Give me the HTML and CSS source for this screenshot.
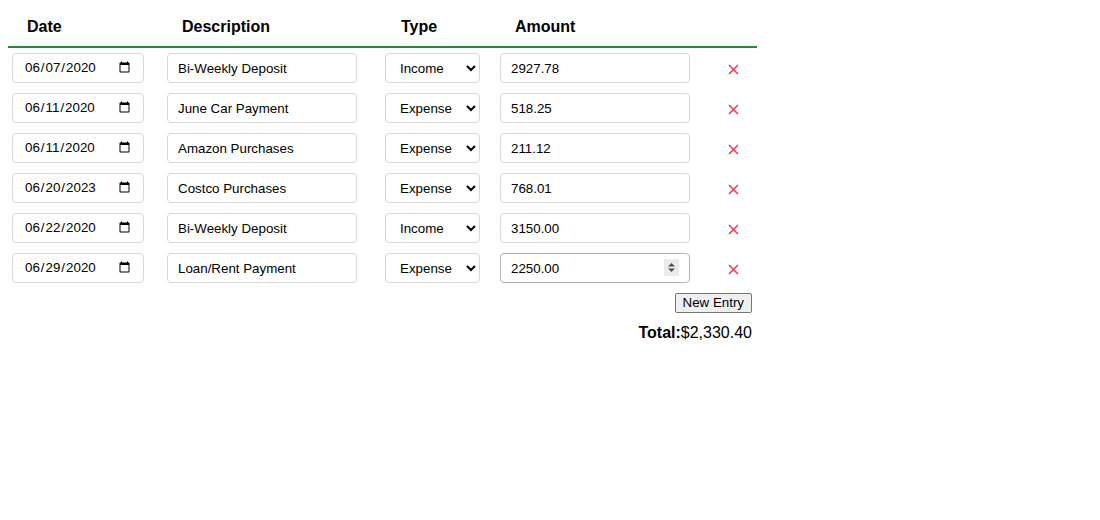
FILE: index.html
```html
<!DOCTYPE html>
<html>
<head>
<meta charset="utf-8">
<link rel="stylesheet" href="styles.css">
</head>
<body>
<div class="ledger">
  <div class="row head">
    <div class="th">Date</div>
    <div class="th">Description</div>
    <div class="th type-h">Type</div>
    <div class="th">Amount</div>
    <div class="th"></div>
  </div>

  <div class="row">
    <div class="cell"><input class="date" type="date" value="2020-06-07"></div>
    <div class="cell"><input class="text" type="text" value="Bi-Weekly Deposit"></div>
    <div class="cell"><select class="type"><option selected>Income</option><option>Expense</option></select></div>
    <div class="cell"><input class="amount" type="text" value="2927.78"></div>
    <div class="cell del"><svg width="11" height="11" viewBox="0 0 11 11"><path d="M1 1L10 10M10 1L1 10" stroke="#f5375a" stroke-width="1.5"/></svg></div>
  </div>

  <div class="row">
    <div class="cell"><input class="date" type="date" value="2020-06-11"></div>
    <div class="cell"><input class="text" type="text" value="June Car Payment"></div>
    <div class="cell"><select class="type"><option>Income</option><option selected>Expense</option></select></div>
    <div class="cell"><input class="amount" type="text" value="518.25"></div>
    <div class="cell del"><svg width="11" height="11" viewBox="0 0 11 11"><path d="M1 1L10 10M10 1L1 10" stroke="#f5375a" stroke-width="1.5"/></svg></div>
  </div>

  <div class="row">
    <div class="cell"><input class="date" type="date" value="2020-06-11"></div>
    <div class="cell"><input class="text" type="text" value="Amazon Purchases"></div>
    <div class="cell"><select class="type"><option>Income</option><option selected>Expense</option></select></div>
    <div class="cell"><input class="amount" type="text" value="211.12"></div>
    <div class="cell del"><svg width="11" height="11" viewBox="0 0 11 11"><path d="M1 1L10 10M10 1L1 10" stroke="#f5375a" stroke-width="1.5"/></svg></div>
  </div>

  <div class="row">
    <div class="cell"><input class="date" type="date" value="2023-06-20"></div>
    <div class="cell"><input class="text" type="text" value="Costco Purchases"></div>
    <div class="cell"><select class="type"><option>Income</option><option selected>Expense</option></select></div>
    <div class="cell"><input class="amount" type="text" value="768.01"></div>
    <div class="cell del"><svg width="11" height="11" viewBox="0 0 11 11"><path d="M1 1L10 10M10 1L1 10" stroke="#f5375a" stroke-width="1.5"/></svg></div>
  </div>

  <div class="row">
    <div class="cell"><input class="date" type="date" value="2020-06-22"></div>
    <div class="cell"><input class="text" type="text" value="Bi-Weekly Deposit"></div>
    <div class="cell"><select class="type"><option selected>Income</option><option>Expense</option></select></div>
    <div class="cell"><input class="amount" type="text" value="3150.00"></div>
    <div class="cell del"><svg width="11" height="11" viewBox="0 0 11 11"><path d="M1 1L10 10M10 1L1 10" stroke="#f5375a" stroke-width="1.5"/></svg></div>
  </div>

  <div class="row">
    <div class="cell"><input class="date" type="date" value="2020-06-29"></div>
    <div class="cell"><input class="text" type="text" value="Loan/Rent Payment"></div>
    <div class="cell"><select class="type"><option>Income</option><option selected>Expense</option></select></div>
    <div class="cell">
      <div class="amount-wrap">
        <input class="amount hovered" type="text" value="2250.00">
        <span class="spinner"><svg width="15" height="17" viewBox="0 0 15 17"><rect width="15" height="17" fill="#ececec"/><path d="M4 7.5L7.5 4L11 7.5Z M4 9.5L7.5 13L11 9.5Z" fill="#505050"/></svg></span>
      </div>
    </div>
    <div class="cell del"><svg width="11" height="11" viewBox="0 0 11 11"><path d="M1 1L10 10M10 1L1 10" stroke="#f5375a" stroke-width="1.5"/></svg></div>
  </div>

  <div class="footer">
    <button class="new-btn" type="button">New Entry</button>
    <div class="total"><b>Total:</b>$2,330.40</div>
  </div>
</div>
</body>
</html>
```

FILE: styles.css
```css
body {
  margin: 8px;
  font-family: "Liberation Sans", Arial, sans-serif;
  color: #000;
  background: #fff;
}

.ledger {
  width: 749px;
}

.row {
  display: grid;
  grid-template-columns: 155px 218px 115px 219px 42px;
  height: 40px;
  align-items: center;
}

.row.head {
  height: 38px;
  border-bottom: 2px solid #228b35;
}

.th {
  font-size: 16px;
  font-weight: bold;
  padding-left: 19px;
  padding-bottom: 1px;
}

.th.type-h {
  padding-left: 20px;
}

.cell {
  padding-left: 4px;
  display: flex;
  align-items: center;
}

input, select {
  font-family: "Liberation Sans", Arial, sans-serif;
  font-size: 13.3333px;
  color: #000;
  height: 30px;
  box-sizing: border-box;
  border: 1px solid #d9d9d9;
  border-radius: 4px;
  background: #fff;
  margin: 0;
  outline: none;
}

.date {
  width: 132px;
  padding: 0 10px 0 11px;
}

.text {
  width: 190px;
  padding: 0 10px;
}

.type {
  width: 95px;
  padding: 0 6px 0 10px;
}

.amount {
  width: 190px;
  padding: 0 10px;
}

.amount.hovered {
  border-color: #b3b3b3;
}

.amount-wrap {
  position: relative;
  width: 190px;
  height: 30px;
}

.spinner {
  position: absolute;
  right: 11px;
  top: 6px;
  width: 15px;
  height: 17px;
  display: block;
}

.spinner svg {
  display: block;
}

.del {
  justify-content: flex-start;
  padding-left: 13px;
  padding-top: 2px;
}

.del svg {
  display: block;
}

.footer {
  display: flex;
  flex-direction: column;
  align-items: flex-end;
  padding-right: 5px;
}

.new-btn {
  margin-top: 5px;
  font-family: "Liberation Sans", Arial, sans-serif;
  font-size: 13.3333px;
  height: 20px;
  padding: 0 7px;
  border: 1px solid #767676;
  border-radius: 2px;
  background: #efefef;
  color: #000;
  line-height: 18px;
}

.total {
  margin-top: 11px;
  font-size: 16px;
  line-height: 18px;
}
```
